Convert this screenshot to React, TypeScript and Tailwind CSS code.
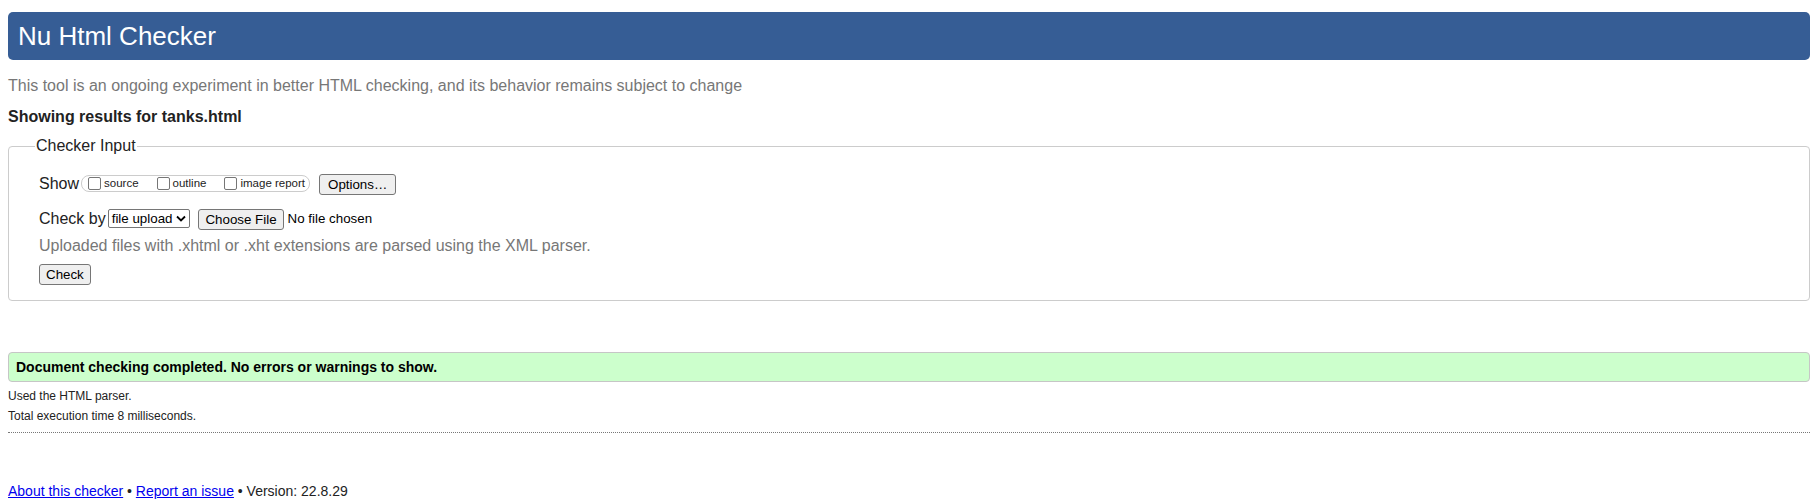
import React from "react";

function Box({ label }: { label: string }) {
  return (
    <label className="flex items-center">
      <span className="w-[13px] h-[13px] border border-[#767676] rounded-[2px] bg-white mr-[3px]" />
      <span className="text-[11.5px] leading-none text-[#222]">{label}</span>
    </label>
  );
}

function Btn({ children, wide }: { children: React.ReactNode; wide?: boolean }) {
  return (
    <button
      className={
        wide
          ? "h-[21px] px-[8px] border border-[#767676] bg-[#efefef] rounded-[3px] text-[13.33px] leading-none text-black"
          : "h-[21px] px-[6px] border border-[#767676] bg-[#efefef] rounded-[3px] text-[13.33px] leading-none text-black"
      }
    >
      {children}
    </button>
  );
}

export default function App() {
  return (
    <div className="min-h-[502px] bg-white px-[8px] pt-[12px] font-['Liberation_Sans',Arial,sans-serif] text-[#222]">
      <h1 className="h-[48px] rounded-[5px] bg-[#365d95] text-white text-[26px] pl-[10px] flex items-center">
        Nu Html Checker
      </h1>

      <p className="mt-[17px] text-[16px] leading-[18px] text-[#777]">
        This tool is an ongoing experiment in better HTML checking, and its
        behavior remains subject to change
      </p>
      <p className="mt-[13px] text-[16px] leading-[18px] font-bold">
        Showing results for tanks.html
      </p>

      <fieldset className="mt-[11px] border border-[#ccc] rounded-[4px] pl-[30px] pb-[14px]">
        <legend className="-ml-[4px] px-[1px] text-[16px] leading-[18px]">
          Checker Input
        </legend>

        <div className="mt-[18px] flex items-center h-[21px]">
          <span className="text-[16px] mr-[2px]">Show</span>
          <div className="flex items-center h-[17px] border border-[#ccc] rounded-[8px] pl-[6px] pr-[4px] gap-[18px]">
            <Box label="source" />
            <Box label="outline" />
            <Box label="image report" />
          </div>
          <div className="ml-[9px]">
            <Btn wide>Options…</Btn>
          </div>
        </div>

        <div className="mt-[14px] flex items-center h-[21px]">
          <span className="text-[16px] mr-[2px]">Check by</span>
          <div className="h-[19px] flex items-center border border-[#767676] rounded-[2px] bg-white pl-[3px] pr-[3px] text-[13.33px] text-black">
            file upload
            <svg className="ml-[4px]" width="10" height="7" viewBox="0 0 10 7">
              <path d="M1 1.5 L5 5.5 L9 1.5" fill="none" stroke="#000" strokeWidth="1.8" />
            </svg>
          </div>
          <div className="ml-[8px]">
            <Btn>Choose File</Btn>
          </div>
          <span className="ml-[4px] text-[13.33px] text-black">No file chosen</span>
        </div>

        <p className="mt-[8px] text-[16px] leading-[18px] text-[#777]">
          Uploaded files with .xhtml or .xht extensions are parsed using the XML parser.
        </p>

        <div className="mt-[7px]">
          <Btn>Check</Btn>
        </div>
      </fieldset>

      <div className="mt-[51px] h-[30px] flex items-center pl-[7px] bg-[#ccffcc] border border-[#c6c6c6] rounded-[4px] text-[14px] font-bold text-black">
        Document checking completed. No errors or warnings to show.
      </div>

      <p className="mt-[7px] text-[12px] leading-[14px] text-[#222]">Used the HTML parser.</p>
      <p className="mt-[6px] text-[12px] leading-[14px] text-[#222]">
        Total execution time 8 milliseconds.
      </p>
      <div className="mt-[9px] border-t border-dotted border-[#777]" />

      <p className="mt-[50px] text-[14px] leading-[16px] text-[#222]">
        <a href="#" className="text-[#0000ee] underline">About this checker</a>
        {" • "}
        <a href="#" className="text-[#0000ee] underline">Report an issue</a>
        {" • Version: 22.8.29"}
      </p>
    </div>
  );
}
